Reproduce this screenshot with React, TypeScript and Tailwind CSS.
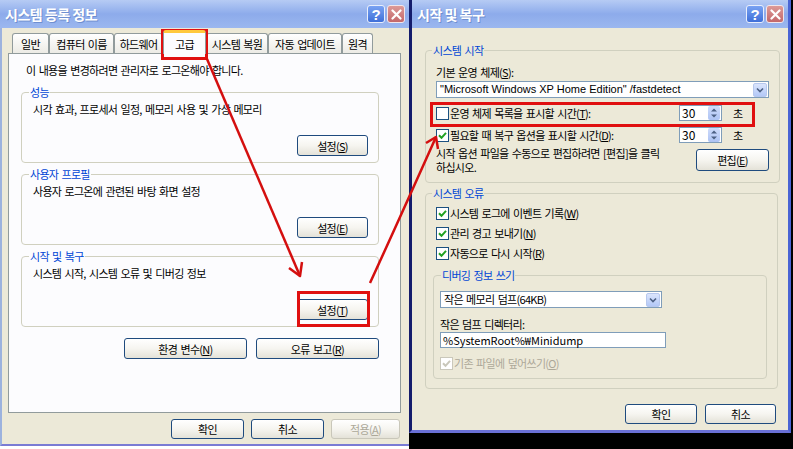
import React from "react";

const K = "tracking-[-0.7px] [word-spacing:1.5px]";

function TitleBar({ title }: { title: string }) {
  return (
    <div className="flex h-[28px] shrink-0 items-center justify-between bg-gradient-to-b from-[#b6cbf4] via-[#8dabeb] to-[#9bb7ef] pl-[5px] pr-[4px]">
      <span className="text-[14px] font-bold tracking-[-0.5px] text-white [text-shadow:1px_1px_0_#6f8fd0]">{title}</span>
      <div className="flex gap-[2px]">
        <div className="flex h-[18px] w-[18px] items-center justify-center rounded-[3px] border border-[#e8eefc] bg-gradient-to-b from-[#79a2f2] to-[#3f6fd8] font-['Liberation_Sans',sans-serif] text-[15px] font-bold leading-none text-white">
          ?
        </div>
        <div className="flex h-[18px] w-[18px] items-center justify-center rounded-[3px] border border-[#f2e6ea] bg-gradient-to-b from-[#dc9a98] to-[#c3676a]">
          <svg width="11" height="11" viewBox="0 0 11 11">
            <path d="M1.5 1.5 L9.5 9.5 M9.5 1.5 L1.5 9.5" stroke="white" strokeWidth="2.2" strokeLinecap="round" />
          </svg>
        </div>
      </div>
    </div>
  );
}

function Btn({ children, className = "", disabled = false }: { children: React.ReactNode; className?: string; disabled?: boolean }) {
  return (
    <div
      className={`flex shrink-0 items-center justify-center rounded-[3px] border bg-gradient-to-b from-white via-[#f6f5f0] to-[#e4e2d8] ${K} ${
        disabled ? "border-[#c9c7ba] text-[#aca899]" : "border-[#1f4b7e] text-black"
      } ${className}`}
    >
      {children}
    </div>
  );
}

function Check({ checked = false, disabled = false }: { checked?: boolean; disabled?: boolean }) {
  return (
    <span
      className={`flex h-[13px] w-[13px] shrink-0 items-center justify-center border bg-white ${
        disabled ? "border-[#cac8bb]" : "border-[#1c5180]"
      }`}
    >
      {checked && (
        <svg width="11" height="11" viewBox="0 0 11 11">
          <path d="M2 5.2 L4.5 7.8 L9 2.8" stroke={disabled ? "#c9c7ba" : "#21a121"} strokeWidth="2" fill="none" />
        </svg>
      )}
    </span>
  );
}

function Combo({ children, className = "" }: { children: React.ReactNode; className?: string }) {
  return (
    <div className={`flex h-[17px] items-center border border-[#7f9db9] bg-white pl-[3px] ${className}`}>
      <span className="flex-1 whitespace-nowrap leading-[15px]">{children}</span>
      <span className="mr-[1px] flex h-[14px] w-[14px] items-center justify-center rounded-[2px] border border-[#b7c8ee] bg-gradient-to-b from-[#dbe5fc] to-[#b3c8f7]">
        <svg width="8" height="6" viewBox="0 0 8 6">
          <path d="M1 1.5 L4 4.5 L7 1.5" stroke="#4d6185" strokeWidth="1.6" fill="none" />
        </svg>
      </span>
    </div>
  );
}

function Spin() {
  return (
    <div className="flex h-[16px] w-[43px] items-center border border-[#7f9db9] bg-white">
      <span className="flex-1 pl-[2px] text-[12px] leading-none">30</span>
      <span className="mr-[1px] flex h-[14px] w-[12px] items-center justify-center rounded-[2px] bg-gradient-to-b from-[#cfdcfb] to-[#adc3f4]">
        <svg width="8" height="12" viewBox="0 0 8 12">
          <path d="M1 4.5 L4 1.5 L7 4.5 Z M1 7.5 L4 10.5 L7 7.5 Z" fill="#4d6185" />
        </svg>
      </span>
    </div>
  );
}

function Group({ label, text, btn, className = "" }: { label: string; text: string; btn: React.ReactNode; className?: string }) {
  return (
    <fieldset className={`w-[358px] rounded-[4px] border border-[#d0d0bf] px-[10px] pb-[6px] pt-[3px] ${className}`}>
      <legend className={`-ml-[3px] px-[1px] text-[#0046d5] ${K}`}>{label}</legend>
      <p className={`pl-[1px] ${K}`}>{text}</p>
      <div className="mt-[19px] flex justify-end">
        <Btn className="h-[21px] w-[71px]">{btn}</Btn>
      </div>
    </fieldset>
  );
}

function LeftWindow() {
  const tab = "flex h-[20px] shrink-0 items-center justify-center rounded-t-[3px] border border-b-0 border-[#919b9c] bg-gradient-to-b from-white to-[#ecebe5]";
  return (
    <div className="flex h-[446px] w-[409px] shrink-0 flex-col bg-[#ece9d8]">
      <TitleBar title="시스템 등록 정보" />
      <div className="flex flex-1 flex-col border-b-2 border-l-2 border-b-[#7a7bd4] border-l-[#9cb2de]">
        <div className={`ml-[10px] flex h-[25px] items-end ${K}`}>
          <div className={`${tab} w-[37px]`}>일반</div>
          <div className={`${tab} w-[65px]`}>컴퓨터 이름</div>
          <div className={`${tab} w-[49px]`}>하드웨어</div>
          <div className="relative z-10 -mb-px flex h-[24px] w-[43px] shrink-0 items-center justify-center rounded-t-[3px] border border-b-0 border-[#919b9c] border-t-[3px] border-t-[#ffc83c] bg-[#fcfcfe]">
            고급
          </div>
          <div className={`${tab} w-[62px]`}>시스템 복원</div>
          <div className={`${tab} w-[74px]`}>자동 업데이트</div>
          <div className={`${tab} w-[31px]`}>원격</div>
        </div>
        <div className="ml-[6px] flex h-[360px] w-[393px] flex-col border border-[#919b9c] bg-[#fcfcfe] pl-[12px] pt-[9px]">
          <p className={`pl-[5px] ${K}`}>이 내용을 변경하려면 관리자로 로그온해야 합니다.</p>
          <Group
            className="mt-[8px]"
            label="성능"
            text="시각 효과, 프로세서 일정, 메모리 사용 및 가상 메모리"
            btn={
              <>
                설정(<u>S</u>)
              </>
            }
          />
          <Group
            className="mt-[4px]"
            label="사용자 프로필"
            text="사용자 로그온에 관련된 바탕 화면 설정"
            btn={
              <>
                설정(<u>E</u>)
              </>
            }
          />
          <Group
            className="mt-[4px]"
            label="시작 및 복구"
            text="시스템 시작, 시스템 오류 및 디버깅 정보"
            btn={
              <>
                설정(<u>T</u>)
              </>
            }
          />
          <div className="mt-[11px] flex w-[358px] justify-end gap-[9px]">
            <Btn className="h-[21px] w-[123px]">
              환경 변수(<u>N</u>)
            </Btn>
            <Btn className="h-[21px] w-[123px]">
              오류 보고(<u>R</u>)
            </Btn>
          </div>
        </div>
        <div className="mt-[6px] flex justify-end gap-[7px] pr-[9px]">
          <Btn className="h-[20px] w-[73px]">확인</Btn>
          <Btn className="h-[20px] w-[73px]">취소</Btn>
          <Btn disabled className="h-[20px] w-[69px]">
            적용(<u>A</u>)
          </Btn>
        </div>
      </div>
    </div>
  );
}

function RightWindow() {
  return (
    <div className="flex h-[449px] w-[384px] shrink-0 flex-col bg-black">
      <div className="flex h-[433px] w-[382px] flex-col border-b-[3px] border-l-[3px] border-r-[3px] border-b-[#6a70d6] border-l-[#141c6c] border-r-[#4a64d4] bg-[#ece9d8]">
        <TitleBar title="시작 및 복구" />
        <div className="flex flex-1 flex-col pl-[13px] pr-[11px] pt-[15px]">
          <fieldset className="w-[352px] rounded-[4px] border border-[#d0d0bf] px-[10px] pb-[8px] pt-[8px]">
            <legend className={`-ml-[4px] px-[1px] text-[#0046d5] ${K}`}>시스템 시작</legend>
            <p className={K}>
              기본 운영 체제(<u>S</u>):
            </p>
            <Combo className="mt-[2px] w-[333px] font-['Liberation_Sans',sans-serif] text-[11px]">
              "Microsoft Windows XP Home Edition" /fastdetect
            </Combo>
            <div className="mt-[6px] flex h-[18px] items-center">
              <div className={`flex w-[243px] items-center gap-[1px] ${K}`}>
                <Check />
                <span>
                  운영 체제 목록을 표시할 시간(<u>T</u>):
                </span>
              </div>
              <Spin />
              <span className="ml-[11px]">초</span>
            </div>
            <div className="mt-[4px] flex h-[18px] items-center">
              <div className={`flex w-[243px] items-center gap-[1px] ${K}`}>
                <Check checked />
                <span>
                  필요할 때 복구 옵션을 표시할 시간(<u>D</u>):
                </span>
              </div>
              <Spin />
              <span className="ml-[11px]">초</span>
            </div>
            <div className="mt-[2px] flex items-center">
              <p className={`w-[250px] leading-[14px] ${K}`}>
                시작 옵션 파일을 수동으로 편집하려면 [편집]을 클릭
                <br />
                하십시오.
              </p>
              <Btn className="ml-auto h-[22px] w-[73px]">
                편집(<u>E</u>)
              </Btn>
            </div>
          </fieldset>
          <fieldset className="mt-[3px] w-[352px] rounded-[4px] border border-[#d0d0bf] px-[10px] pb-[9px] pt-[3px]">
            <legend className={`-ml-[4px] px-[1px] text-[#0046d5] ${K}`}>시스템 오류</legend>
            <div className={`flex h-[20px] items-center gap-[1px] ${K}`}>
              <Check checked />
              <span>
                시스템 로그에 이벤트 기록(<u>W</u>)
              </span>
            </div>
            <div className={`flex h-[20px] items-center gap-[1px] ${K}`}>
              <Check checked />
              <span>
                관리 경고 보내기(<u>N</u>)
              </span>
            </div>
            <div className={`flex h-[20px] items-center gap-[1px] ${K}`}>
              <Check checked />
              <span>
                자동으로 다시 시작(<u>R</u>)
              </span>
            </div>
            <fieldset className="-ml-[3px] mt-[5px] w-[334px] rounded-[4px] border border-[#d0d0bf] px-[6px] pb-[7px] pt-[9px]">
              <legend className={`ml-[1px] px-[1px] text-[#0046d5] ${K}`}>디버깅 정보 쓰기</legend>
              <Combo className={`w-[222px] ${K}`}>작은 메모리 덤프(64KB)</Combo>
              <p className={`mt-[10px] leading-[13px] ${K}`}>작은 덤프 디렉터리:</p>
              <div className="mt-[1px] flex h-[16px] w-[226px] items-center border border-[#7f9db9] bg-white pl-[2px] leading-none">
                %SystemRoot%₩Minidump
              </div>
              <div className={`mt-[7px] flex h-[16px] items-center gap-[1px] text-[#aca899] ${K}`}>
                <Check checked disabled />
                <span>
                  기존 파일에 덮어쓰기(<u>O</u>)
                </span>
              </div>
            </fieldset>
          </fieldset>
          <div className="mr-[1px] mt-[15px] flex justify-end gap-[8px]">
            <Btn className="h-[20px] w-[72px]">확인</Btn>
            <Btn className="h-[20px] w-[71px]">취소</Btn>
          </div>
        </div>
      </div>
    </div>
  );
}

function Overlay() {
  const red = "#d40f0f";
  return (
    <svg className="pointer-events-none absolute left-0 top-0" width="793" height="449" viewBox="0 0 793 449">
      <rect x="162.5" y="30.5" width="44" height="28" fill="none" stroke="#e01010" strokeWidth="3" />
      <rect x="298.5" y="292.5" width="70" height="33" fill="none" stroke="#e01010" strokeWidth="3" />
      <rect x="431.5" y="103.5" width="322" height="22" fill="none" stroke="#e01010" strokeWidth="3" />
      <path d="M207 59 L300 276" stroke={red} strokeWidth="2.5" fill="none" />
      <path d="M289 268 L300 276 L302 262" stroke={red} strokeWidth="2.5" fill="none" strokeLinejoin="round" />
      <path d="M370 283 Q398 222 436 137" stroke={red} strokeWidth="2.5" fill="none" />
      <path d="M426 143 L436 137 L438 149" stroke={red} strokeWidth="2.5" fill="none" strokeLinejoin="round" />
    </svg>
  );
}

export default function App() {
  return (
    <div className="relative flex h-[449px] w-[793px] overflow-hidden bg-white font-['Noto_Sans_CJK_KR','Liberation_Sans',sans-serif] text-[11px] leading-[14px] text-black">
      <LeftWindow />
      <RightWindow />
      <Overlay />
    </div>
  );
}
